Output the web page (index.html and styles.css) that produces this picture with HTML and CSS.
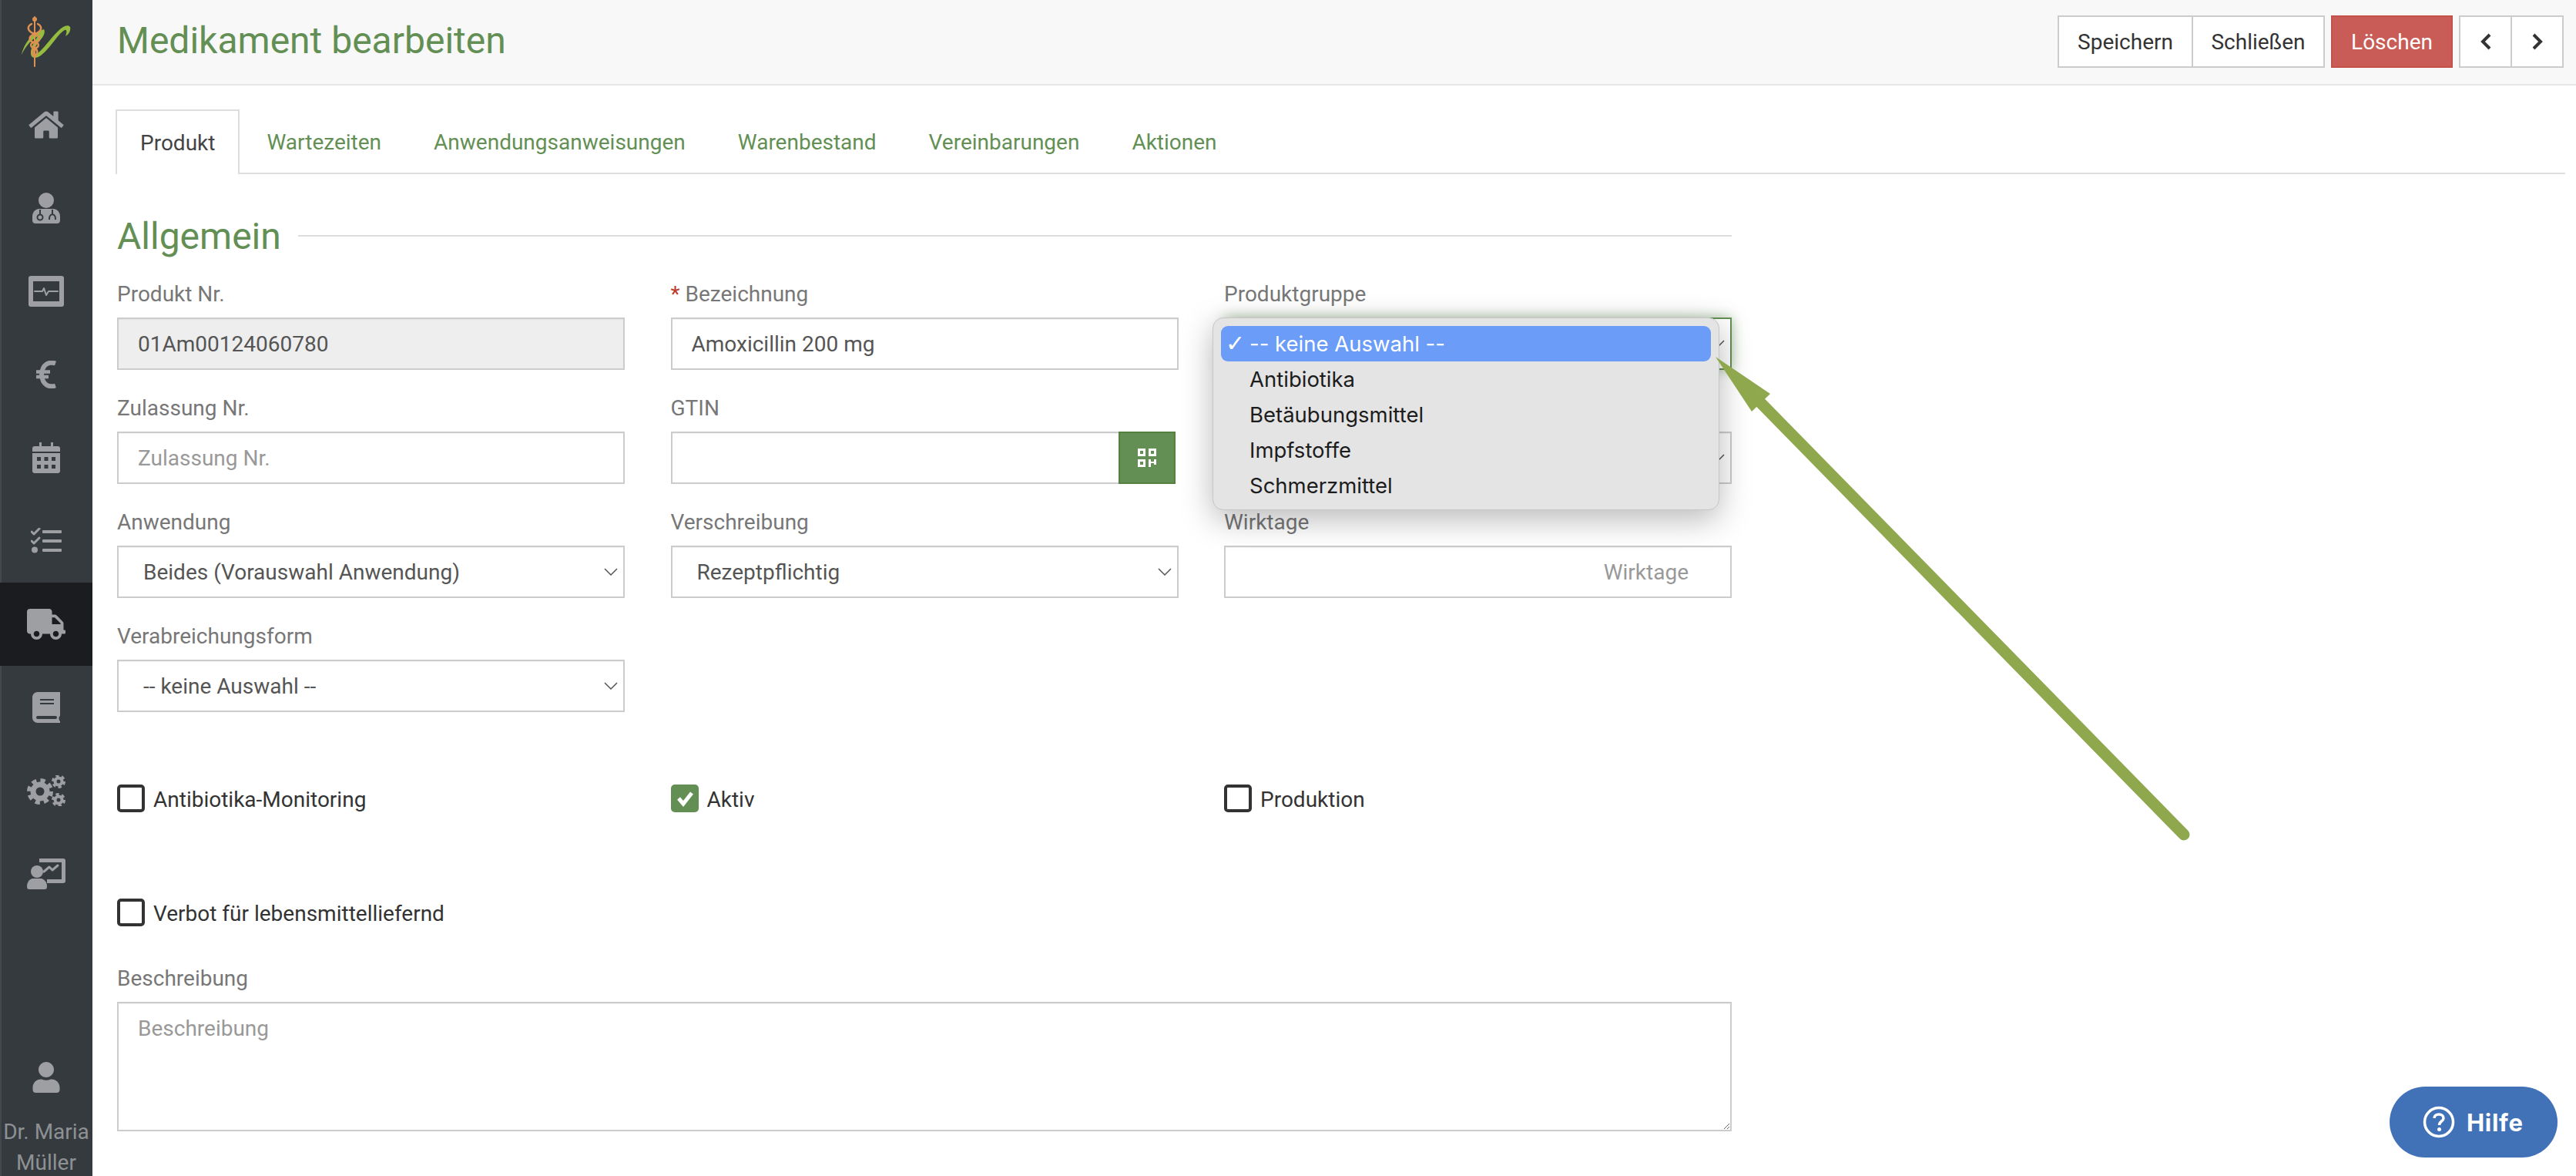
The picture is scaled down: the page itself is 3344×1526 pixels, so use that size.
FILE: index.html
```html
<!DOCTYPE html>
<html lang="de">
<head>
<meta charset="utf-8">
<title>Medikament bearbeiten</title>
<link rel="stylesheet" href="styles.css">
</head>
<body>
<div class="app">
  <aside class="sidebar">
    <div class="nav-item logo">
      <svg width="120" height="108" viewBox="0 0 120 108">
        <path class="logo-green" d="M28 71C31 58 40 43 57 38C59 42 57 46 54 50C50 54 46 60 44 65C43 70 46 71 49 69C59 61 68 46 79 37C84 33 89 32 91 35C92 39 90 44 85 47C87 42 87 38 84 39C75 44 66 62 53 72C46 77 39 76 40 67C41 60 45 53 49 47C41 51 33 60 28 71Z"/>
        <path class="logo-orange" d="M45 22V86" stroke-width="2"/>
        <circle class="logo-dot" cx="45" cy="25" r="3"/>
        <path class="logo-orange" d="M41 31C34 35 36 41 45 44C54 47 53 54 45 55C38 56 39 61 45 63C50 65 49 70 45 73M49 31C56 35 54 41 45 44C36 47 37 54 45 55C52 56 51 61 45 63C40 65 41 70 45 73" stroke-width="2.500"/>
      </svg>
    </div>
    <div class="nav-item">
      <svg class="icon" width="46" height="40" viewBox="0 0 576 512"><path d="M280.37 148.26L96 300.11V464a16 16 0 0 0 16 16l112.06-.29a16 16 0 0 0 15.92-16V368a16 16 0 0 1 16-16h64a16 16 0 0 1 16 16v95.64a16 16 0 0 0 16 16.05L464 480a16 16 0 0 0 16-16V300L295.67 148.26a12.19 12.19 0 0 0-15.3 0zM571.6 251.47L488 182.56V44.05a12 12 0 0 0-12-12h-56a12 12 0 0 0-12 12v72.61L318.47 43a48 48 0 0 0-61 0L4.34 251.47a12 12 0 0 0-1.6 16.9l25.5 31A12 12 0 0 0 45.15 301l235.22-193.74a12.19 12.19 0 0 1 15.3 0L530.9 301a12 12 0 0 0 16.9-1.6l25.5-31a12 12 0 0 0-1.7-16.93z"/></svg>
    </div>
    <div class="nav-item">
      <svg class="icon" width="36" height="40" viewBox="0 0 36 40">
        <circle cx="18" cy="10" r="10"/>
        <path d="M8 21H28C33 22 36 26 36 31V36C36 38.500 34.500 40 32 40H4C1.500 40 0 38.500 0 36V31C0 26 3 22 8 21Z"/>
        <g class="icon-cut"><path d="M10 22V28M26 22V28C30 29 30 32 30 35M22 35C22 32 22 29 26 28"/><circle cx="10" cy="32" r="3.500"/></g>
      </svg>
    </div>
    <div class="nav-item">
      <svg class="icon" width="46" height="40" viewBox="0 0 46 40">
        <rect width="46" height="40" rx="3"/>
        <rect class="icon-hole" x="6" y="7" width="34" height="26"/>
        <path class="icon-line icon-thin" d="M8 20H18L20 16L23 25L26 20H38"/>
      </svg>
    </div>
    <div class="nav-item">
      <svg width="28" height="36" viewBox="0 0 28 36"><path class="icon-line icon-thick" d="M26 3.500C18 1 9 4 8 18C9 32 18 35 26 32.500"/><path class="icon-line icon-bar" d="M1 14.500H19M1 21H17"/></svg>
    </div>
    <div class="nav-item">
      <svg class="icon" width="36" height="40" viewBox="0 0 36 40">
        <path d="M9 0H12V5H24V0H27V5H33C35 5 36 6 36 8V12H0V8C0 6 1 5 3 5H9Z"/>
        <path d="M0 14H36V37C36 39 35 40 33 40H3C1 40 0 39 0 37Z"/>
        <g class="icon-hole"><rect x="6" y="19" width="5" height="5"/><rect x="15.500" y="19" width="5" height="5"/><rect x="25" y="19" width="5" height="5"/><rect x="6" y="29" width="5" height="5"/><rect x="15.500" y="29" width="5" height="5"/><rect x="25" y="29" width="5" height="5"/></g>
      </svg>
    </div>
    <div class="nav-item">
      <svg class="icon" width="40" height="34" viewBox="0 0 40 34">
        <path class="icon-line" d="M1 5L4 8L11 1M1 17L4 20L11 13"/>
        <circle cx="5" cy="28.500" r="4"/>
        <rect x="15" y="3" width="25" height="4" rx="1"/><rect x="15" y="15" width="25" height="4" rx="1"/><rect x="15" y="27" width="25" height="4" rx="1"/>
      </svg>
    </div>
    <div class="nav-item active">
      <svg class="icon" width="50" height="40" viewBox="0 0 640 512"><path d="M624 352h-16V243.900c0-12.700-5.100-24.900-14.100-33.900L494 110.100c-9-9-21.200-14.100-33.900-14.100H416V48c0-26.500-21.500-48-48-48H48C21.500 0 0 21.500 0 48v320c0 26.500 21.500 48 48 48h16c0 53 43 96 96 96s96-43 96-96h128c0 53 43 96 96 96s96-43 96-96h48c8.800 0 16-7.200 16-16v-32c0-8.800-7.200-16-16-16zM160 464c-26.500 0-48-21.500-48-48s21.500-48 48-48 48 21.500 48 48-21.500 48-48 48zm320 0c-26.500 0-48-21.500-48-48s21.500-48 48-48 48 21.500 48 48-21.500 48-48 48zm80-208H416V144h44.100l99.900 99.900V256z"/></svg>
    </div>
    <div class="nav-item">
      <svg class="icon" width="36" height="40" viewBox="0 0 36 40">
        <path d="M7 0H36V31C34 32 34 36 36 38V40H7C3 40 0 37 0 33V7C0 3 3 0 7 0Z"/>
        <g class="icon-hole"><rect x="10" y="9" width="18" height="2"/><rect x="10" y="14" width="18" height="2"/><rect x="5" y="31" width="27" height="4" rx="2"/></g>
      </svg>
    </div>
    <div class="nav-item">
      <svg class="icon" width="50" height="40" viewBox="0 0 50 40">
        <g class="gear"><circle class="gear-teeth big" cx="17" cy="21" r="14"/><circle class="gear-ring big-ring" cx="17" cy="21" r="9"/></g>
        <g class="gear"><circle class="gear-teeth small" cx="41" cy="8" r="7"/><circle class="gear-ring small-ring" cx="41" cy="8" r="4.500"/></g>
        <g class="gear"><circle class="gear-teeth small" cx="41" cy="32" r="7"/><circle class="gear-ring small-ring" cx="41" cy="32" r="4.500"/></g>
      </svg>
    </div>
    <div class="nav-item">
      <svg class="icon" width="50" height="40" viewBox="0 0 50 40">
        <path d="M16 0H47C49 0 50 1 50 3V29C50 31 49 32 47 32H26V27H45V5H16Z"/>
        <circle cx="13" cy="17" r="8"/>
        <path d="M7 26H19C24 28 26 32 26 36C26 39 25 40 23 40H3C1 40 0 39 0 36C0 31 3 27 7 26Z"/>
        <path class="icon-line" d="M22 17L29 11L33 15L40 9"/>
      </svg>
    </div>
    <div class="user">
      <svg class="icon" width="36" height="40" viewBox="0 0 448 512"><path d="M224 256c70.700 0 128-57.300 128-128S294.700 0 224 0 96 57.300 96 128s57.300 128 128 128zm89.600 32h-16.700c-22.200 10.200-46.900 16-72.900 16s-50.600-5.800-72.900-16h-16.700C60.200 288 0 348.200 0 422.400V464c0 26.500 21.500 48 48 48h352c26.500 0 48-21.500 48-48v-41.600c0-74.200-60.200-134.400-134.400-134.400z"/></svg>
      <div class="user-name">Dr. Maria<br>Müller</div>
    </div>
  </aside>

  <main class="main">
    <header class="topbar">
      <h1 class="page-title">Medikament bearbeiten</h1>
      <div class="actions">
        <div class="btn-group">
          <button class="btn btn-save" type="button">Speichern</button>
          <button class="btn btn-close" type="button">Schließen</button>
        </div>
        <button class="btn btn-danger" type="button">Löschen</button>
        <div class="btn-group">
          <button class="btn btn-nav" type="button"><svg width="16" height="24" viewBox="0 0 16 24"><path class="chev" d="M13 3L4 12L13 21"/></svg></button>
          <button class="btn btn-nav" type="button"><svg width="16" height="24" viewBox="0 0 16 24"><path class="chev" d="M3 3L12 12L3 21"/></svg></button>
        </div>
      </div>
    </header>

    <nav class="tabs">
      <a class="tab tab-active">Produkt</a>
      <a class="tab">Wartezeiten</a>
      <a class="tab">Anwendungsanweisungen</a>
      <a class="tab">Warenbestand</a>
      <a class="tab">Vereinbarungen</a>
      <a class="tab">Aktionen</a>
    </nav>

    <section class="form">
      <h2 class="section-title"><span>Allgemein</span></h2>
      <div class="grid">
        <div class="field">
          <label class="label">Produkt Nr.</label>
          <input class="control readonly" value="01Am00124060780" readonly>
        </div>
        <div class="field">
          <label class="label"><span class="req">*</span> Bezeichnung</label>
          <input class="control" value="Amoxicillin 200 mg">
        </div>
        <div class="field">
          <label class="label">Produktgruppe</label>
          <select class="control select focused"><option></option></select>
          <div class="dropdown">
            <div class="option selected"><span class="tick">✓</span>-- keine Auswahl --</div>
            <div class="option">Antibiotika</div>
            <div class="option">Betäubungsmittel</div>
            <div class="option">Impfstoffe</div>
            <div class="option">Schmerzmittel</div>
          </div>
        </div>

        <div class="field">
          <label class="label">Zulassung Nr.</label>
          <input class="control" placeholder="Zulassung Nr.">
        </div>
        <div class="field">
          <label class="label">GTIN</label>
          <div class="input-group">
            <input class="control grouped">
            <button class="scan" type="button">
              <svg width="26" height="26" viewBox="0 0 26 26">
                <path class="qr" fill-rule="evenodd" d="M1 1H11V11H1ZM4 4V8H8V4ZM15 1H25V11H15ZM18 4V8H22V4ZM1 15H11V25H1ZM4 18V22H8V18ZM15 15H18V18H22V15H25V22H22V20H18V25H15Z"/>
              </svg>
            </button>
          </div>
        </div>
        <div class="field">
          <div class="label"></div>
          <select class="control select"><option></option></select>
        </div>

        <div class="field">
          <label class="label">Anwendung</label>
          <select class="control select"><option>Beides (Vorauswahl Anwendung)</option></select>
        </div>
        <div class="field">
          <label class="label">Verschreibung</label>
          <select class="control select"><option>Rezeptpflichtig</option></select>
        </div>
        <div class="field">
          <label class="label">Wirktage</label>
          <input class="control right" placeholder="Wirktage">
        </div>

        <div class="field">
          <label class="label">Verabreichungsform</label>
          <select class="control select"><option>-- keine Auswahl --</option></select>
        </div>
        <div class="field"></div>
        <div class="field"></div>

        <div class="check-row">
          <span class="box"></span><span class="check-text">Antibiotika-Monitoring</span>
        </div>
        <div class="check-row">
          <span class="box checked"><svg width="30" height="30" viewBox="0 0 30 30"><path class="tick-mark" d="M7 15L13 22L24 8"/></svg></span><span class="check-text">Aktiv</span>
        </div>
        <div class="check-row">
          <span class="box"></span><span class="check-text">Produktion</span>
        </div>

        <div class="check-row check-row-2">
          <span class="box"></span><span class="check-text">Verbot für lebensmittelliefernd</span>
        </div>
        <div class="field field-wide">
          <label class="label">Beschreibung</label>
          <textarea class="control area" placeholder="Beschreibung"></textarea>
        </div>
      </div>
    </section>
  </main>

  <svg class="arrow" width="3344" height="1526" viewBox="0 0 3344 1526">
    <path class="arrow-shaft" d="M2835 1083L2280 517"/>
    <path class="arrow-head" d="M2227 463L2298 511L2274 534Z"/>
  </svg>

  <button class="help" type="button">
    <svg width="42" height="42" viewBox="0 0 42 42">
      <circle class="help-ring" cx="21" cy="21" r="18.500"/>
      <path class="help-q" d="M15 16C15 12.500 18 11 21 11C24.500 11 27 13 27 16C27 20 21.500 20 21.500 25"/>
      <circle class="help-dot" cx="21.500" cy="30.500" r="2.500"/>
    </svg>
    <span>Hilfe</span>
  </button>
</div>
</body>
</html>
```
FILE: styles.css
```css
* { box-sizing: border-box; }
html, body { margin: 0; padding: 0; height: 100%; overflow: hidden; background: #fff; }
body { font-family: Roboto, "Liberation Sans", sans-serif; color: #444; }

.app { position: relative; display: flex; width: 3344px; height: 1526px; overflow: hidden; }

/* Sidebar */
.sidebar {
  flex: 0 0 120px; width: 120px; height: 100%;
  display: flex; flex-direction: column;
  background: #353a3f; border-left: 2px solid #43484c;
  margin: 0;
}
.nav-item { flex: 0 0 108px; height: 108px; display: flex; align-items: center; justify-content: center; margin-left: -2px; }
.nav-item.active { background: #1a1c1f; }
.nav-item svg { display: block; }
.icon { fill: #9d9fa2; }
.icon-hole { fill: #353a3f; }
.active .icon-hole { fill: #1a1c1f; }
.icon-cut { fill: none; stroke: #353a3f; stroke-width: 2; }
.icon-line { fill: none; stroke: #9d9fa2; stroke-width: 3; stroke-linecap: round; stroke-linejoin: round; }
.icon-thin { stroke-width: 2; }
.icon-thick { stroke-width: 6; stroke-linecap: butt; }
.icon-bar { stroke-width: 4.500; stroke-linecap: butt; }
.logo-green { fill: #95bb3f; }
.logo-orange { fill: none; stroke: #dd9050; stroke-linecap: round; }
.logo-dot { fill: #dd9050; }
.gear-teeth { fill: none; stroke: #9d9fa2; }
.gear-teeth.big { stroke-width: 6; stroke-dasharray: 6 5; }
.gear-teeth.small { stroke-width: 4; stroke-dasharray: 4 3.330; }
.gear-ring { fill: #353a3f; stroke: #9d9fa2; }
.gear-ring.big-ring { stroke-width: 7; }
.gear-ring.small-ring { stroke-width: 4; }

.user { margin-top: auto; margin-left: -2px; margin-bottom: -3px; display: flex; flex-direction: column; align-items: center; }
.user-name { margin-top: 31px; height: 80px; font-size: 28px; line-height: 40px; text-align: center; color: #8e9194; white-space: nowrap; }

/* Main */
.main { flex: 1 1 auto; min-width: 0; display: flex; flex-direction: column; }
.topbar {
  flex: 0 0 111px; height: 111px; display: flex; align-items: flex-start; justify-content: space-between;
  padding: 20px 16px 0 32px; background: #f8f8f8; border-bottom: 2px solid #e7e7e7;
}
.page-title { margin: 0; font-size: 48px; line-height: 66px; font-weight: 400; color: #638f54; }
.actions { display: flex; gap: 8px; }
.btn-group { display: flex; }
.btn {
  height: 68px; border: 2px solid #ccc; background: #fff; color: #333;
  font: 400 28px Roboto, sans-serif; padding: 0; margin: 0; display: flex; align-items: center; justify-content: center;
}
.btn-group .btn + .btn { margin-left: -2px; }
.btn-save { width: 176px; }
.btn-close { width: 173px; }
.btn-danger { width: 158px; background: #c95c56; border-color: #c4504a; color: #fff; }
.btn-nav { width: 69px; }
.chev { fill: none; stroke: #333; stroke-width: 4; }

/* Tabs */
.tabs { display: flex; height: 84px; margin: 31px 14px 0 30px; border-bottom: 2px solid #ddd; }
.tab { height: 84px; padding: 0 33px; display: flex; align-items: center; font-size: 28px; color: #638f54; white-space: nowrap; }
.tab + .tab { margin-left: 2px; }
.tab-active { color: #444; background: #fff; border: 2px solid #ddd; border-bottom: 0; padding: 0 30px; }

/* Form */
.form { width: 2128px; padding-left: 32px; }
.section-title { display: flex; align-items: center; gap: 22px; height: 60px; margin: 50px 0 29px; font-size: 48px; font-weight: 400; color: #638f54; }
.section-title span { white-space: nowrap; }
.section-title::after { content: ""; flex: 1; height: 2px; background: #ddd; }
.grid { display: grid; grid-template-columns: repeat(3, 659px); column-gap: 59.5px; }
.field { position: relative; height: 148px; }
.field-wide { grid-column: 1 / -1; }
.label { display: block; height: 32px; margin-bottom: 15px; font-size: 28px; line-height: 34px; color: #777; white-space: nowrap; }
.req { color: #c0392b; }

.control {
  display: block; width: 100%; height: 68px; padding: 0 25px;
  border: 2px solid #ccc; border-radius: 0; background: #fff; outline: 0;
  font: 400 28px Roboto, sans-serif; color: #555;
  box-shadow: inset 0 1px 1px rgba(0,0,0,.05);
}
.control::placeholder { color: #999; opacity: 1; }
.readonly { background: #eee; }
.right { text-align: right; padding-right: 54px; }
.select {
  appearance: none; -webkit-appearance: none; padding: 0 40px 0 32px;
  background: #fff url("data:image/svg+xml,%3Csvg xmlns='http://www.w3.org/2000/svg' width='18' height='10' viewBox='0 0 18 10'%3E%3Cpath d='M1 1l8 8 8-8' fill='none' stroke='%23555' stroke-width='1.500'/%3E%3C/svg%3E") no-repeat right 7px center;
}
.focused { border-color: #638f54; box-shadow: 0 0 16px rgba(99,143,84,.55); }

.input-group { display: flex; width: 655px; }
.grouped { flex: 1; min-width: 0; border-right: 0; }
.scan { flex: 0 0 74px; height: 68px; padding: 0; display: flex; align-items: center; justify-content: center; background: #638f54; border: 2px solid #55803f; }
.qr { fill: #fff; }

.dropdown {
  position: absolute; left: -15px; top: 47px; z-index: 5; width: 658px; height: 250px; padding: 10px;
  background: #e4e4e4; border-radius: 14px; border: 1px solid #c6c6c6;
  box-shadow: 0 12px 42px rgba(0,0,0,.28);
  font: 400 27.5px Inter, "Liberation Sans", sans-serif; color: #1c1c1c;
}
.option { position: relative; height: 46px; line-height: 46px; padding-left: 37px; white-space: nowrap; }
.selected { background: #6a9cf8; color: #fff; border-radius: 9px; }
.tick { position: absolute; left: 6px; font: 400 30px "DejaVu Sans", sans-serif; line-height: 46px; }

.check-row { height: 148px; padding-top: 61px; display: flex; align-items: flex-start; }
.check-row-2 { grid-column: 1 / -1; }
.box { flex: 0 0 36px; width: 36px; height: 36px; border: 4px solid #333; border-radius: 5px; display: flex; align-items: center; justify-content: center; }
.box.checked { background: #638f54; border: 0; }
.tick-mark { fill: none; stroke: #fff; stroke-width: 5; }
.check-text { margin-left: 11px; font-size: 28px; line-height: 40px; color: #333; white-space: nowrap; }

.area { height: 168px; padding: 16px 25px; resize: both; }

/* Overlay */
.arrow { position: absolute; left: 0; top: 0; z-index: 10; pointer-events: none; }
.arrow-shaft { fill: none; stroke: #8fa84e; stroke-width: 15; stroke-linecap: round; }
.arrow-head { fill: #8fa84e; }

.help {
  position: absolute; left: 3102px; top: 1410px; z-index: 20; width: 218px; height: 92px;
  display: flex; align-items: center; justify-content: flex-start; gap: 15px; padding: 0 0 0 43px;
  background: #4172b8; border: 0; border-radius: 46px; color: #fff;
  font: 700 31px Inter, sans-serif; letter-spacing: .7px;
}
.help-ring, .help-q { fill: none; stroke: #fff; stroke-width: 3.500; }
.help-dot { fill: #fff; }
```
